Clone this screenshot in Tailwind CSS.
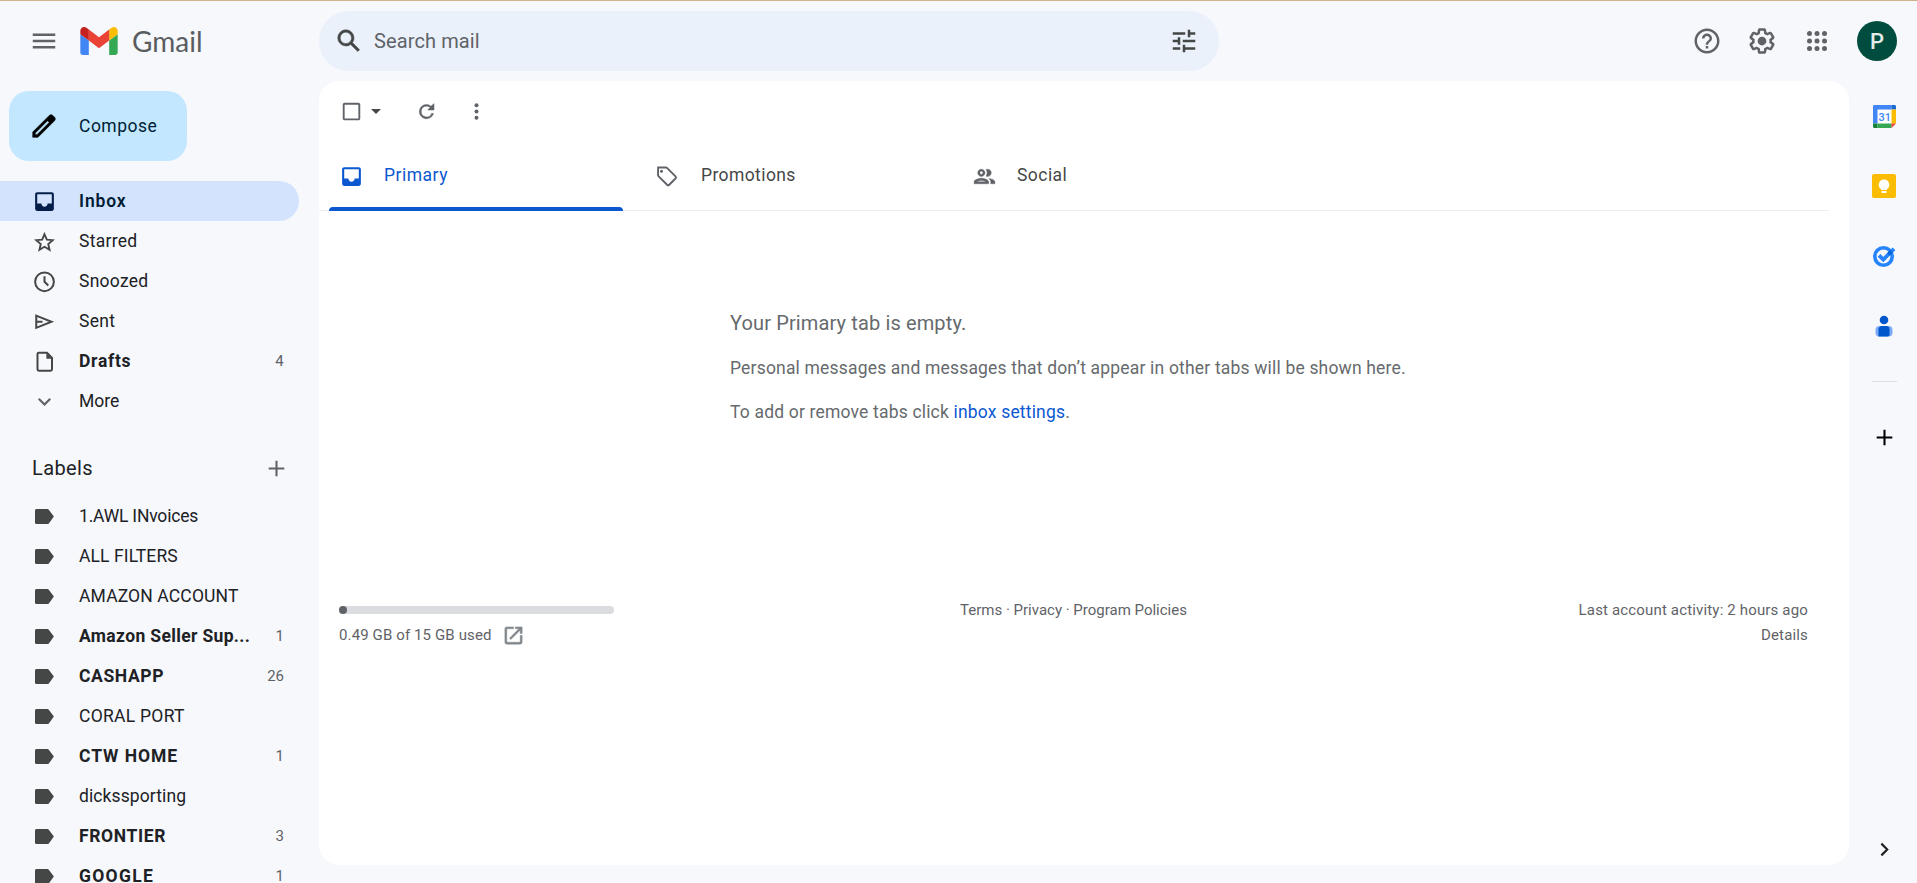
<!DOCTYPE html>
<html lang="en">
<head>
    <meta charset="UTF-8">
    <meta name="viewport" content="width=device-width, initial-scale=1.0">
    <title>Inbox - Gmail</title>
    <script src="https://cdn.jsdelivr.net/npm/@tailwindcss/browser@4"></script>
</head>
<body class="h-screen overflow-hidden bg-[#f6f8fc] border-t border-[#cdb28c] font-['Roboto',sans-serif] text-[#202124] flex flex-col">
    <!-- shared icons -->
    <svg class="hidden">
        <symbol id="label" viewBox="0 0 20 20"><path d="M3.500 4h8.700c.6 0 1.100.3 1.400.7L17.500 10l-3.900 5.300c-.3.400-.8.700-1.400.700H3.500C2.700 16 2.400 15.300 2.400 14.500v-9C2.400 4.700 2.700 4 3.500 4z"/></symbol>
        <symbol id="inbox" viewBox="0 0 24 24"><path d="M19 3H5c-1.100 0-2 .9-2 2v14c0 1.100.9 2 2 2h14c1.100 0 2-.9 2-2V5c0-1.100-.9-2-2-2zm0 11h-4c0 1.660-1.350 3-3 3s-3-1.340-3-3H5V5h14v9z"/></symbol>
        <symbol id="plus" viewBox="0 0 24 24"><path d="M19.500 13h-6.500v6.500h-2v-6.500H4.500v-2h6.500V4.500h2v6.500h6.500z"/></symbol>
    </svg>

    <header class="h-20 shrink-0 flex items-center">
        <div class="w-[319px] shrink-0 flex items-center pl-[29px]">
            <svg class="size-[30px] fill-[#5f6368]" viewBox="0 0 24 24"><path d="M3 18h18v-2H3v2zm0-5h18v-2H3v2zm0-7v2h18V6H3z"/></svg>
            <svg class="ml-[21px] w-[38px] h-7" viewBox="52 42 88 66">
                <path fill="#4285f4" d="M58 108h14V74L52 59v43c0 3.320 2.690 6 6 6"/>
                <path fill="#34a853" d="M120 108h14c3.320 0 6-2.690 6-6V59l-20 15"/>
                <path fill="#fbbc04" d="M120 48v26l20-15v-8c0-7.420-8.470-11.650-14.400-7.200"/>
                <path fill="#ea4335" d="M72 74V48l24 18 24-18v26L96 92"/>
                <path fill="#c5221f" d="M52 51v8l20 15V48l-5.600-4.200c-5.940-4.450-14.400-.22-14.400 7.200"/>
            </svg>
            <span class="ml-[14px] text-[28px] leading-none font-['Lato',sans-serif] text-[#5a5d60]">Gmail</span>
        </div>
        <div class="w-[900px] h-[60px] rounded-full bg-[#eaf1fb] flex items-center pl-[15px] pr-5">
            <svg class="size-[30px] fill-[#444746]" viewBox="0 0 24 24"><path stroke="#444746" stroke-width=".4" d="M20.490 19l-5.730-5.730C15.530 12.200 16 10.910 16 9.500A6.500 6.500 0 1 0 9.500 16c1.410 0 2.700-.47 3.770-1.240L19 20.490 20.490 19zM5 9.500C5 7.010 7.010 5 9.500 5S14 7.010 14 9.500 11.990 14 9.500 14 5 11.990 5 9.500z"/></svg>
            <span class="ml-[10px] flex-1 text-xl tracking-[0.11px] text-[#5f6368]">Search mail</span>
            <svg class="size-[30px] fill-[#444746]" viewBox="0 0 24 24"><path d="M3 17v2h6v-2H3zM3 5v2h10V5H3zm10 16v-2h8v-2h-8v-2h-2v6h2zM7 9v2H3v2h4v2h2V9H7zm14 4v-2H11v2h10zm-6-4h2V7h4V5h-4V3h-2v6z"/></svg>
        </div>
        <div class="ml-auto mr-5 flex items-center gap-[25px]">
            <svg class="size-[30px] fill-[#5f6368]" viewBox="0 0 24 24"><path d="M11 18h2v-2h-2v2zm1-16C6.480 2 2 6.480 2 12s4.480 10 10 10 10-4.480 10-10S17.520 2 12 2zm0 18c-4.410 0-8-3.590-8-8s3.590-8 8-8 8 3.590 8 8-3.590 8-8 8zm0-14c-2.210 0-4 1.790-4 4h2c0-1.100.9-2 2-2s2 .9 2 2c0 2-3 1.750-3 5h2c0-2.250 3-2.500 3-5 0-2.210-1.790-4-4-4z"/></svg>
            <svg class="size-[30px] fill-[#5f6368]" viewBox="0 0 24 24"><path d="M13.850 22.250h-3.700c-.74 0-1.360-.54-1.450-1.270l-.27-1.890c-.27-.14-.53-.29-.79-.46l-1.800.72c-.7.260-1.470-.03-1.810-.65L2.200 15.530c-.35-.66-.2-1.440.36-1.880l1.530-1.190c-.01-.15-.02-.3-.02-.46 0-.15.010-.31.020-.46l-1.520-1.190c-.59-.45-.74-1.260-.37-1.880l1.850-3.190c.34-.62 1.110-.9 1.790-.63l1.810.73c.26-.17.520-.32.780-.46l.27-1.910c.09-.7.710-1.250 1.440-1.250h3.700c.74 0 1.360.54 1.450 1.270l.27 1.890c.27.140.53.290.79.460l1.800-.72c.71-.26 1.480.03 1.820.65l1.840 3.180c.36.660.2 1.440-.36 1.880l-1.520 1.190c.01.150.02.300.02.460s-.01.310-.02.460l1.520 1.190c.56.450.720 1.230.37 1.860l-1.860 3.220c-.34.620-1.110.9-1.800.63l-1.800-.72c-.26.170-.52.320-.78.460l-.27 1.910c-.1.680-.72 1.220-1.460 1.220zm-3.230-2h2.760l.37-2.550.53-.22c.44-.18.880-.44 1.340-.78l.45-.34 2.380.96 1.380-2.400-2.030-1.580.07-.56c.03-.26.060-.51.060-.78s-.03-.53-.06-.78l-.07-.56 2.030-1.580-1.390-2.400-2.390.96-.45-.35c-.42-.32-.87-.58-1.330-.77l-.52-.22-.37-2.550h-2.760l-.37 2.550-.53.210c-.44.190-.88.440-1.340.79l-.45.330-2.380-.95-1.390 2.390 2.030 1.580-.07.56a7 7 0 0 0-.06.79c0 .26.020.530.060.78l.07.56-2.030 1.580 1.380 2.400 2.390-.96.450.35c.43.330.86.580 1.330.77l.53.220.38 2.550z"/><circle cx="12" cy="12" r="3.500"/></svg>
            <svg class="size-[30px] fill-[#5f6368]" viewBox="0 0 24 24"><circle cx="6" cy="6" r="2"/><circle cx="12" cy="6" r="2"/><circle cx="18" cy="6" r="2"/><circle cx="6" cy="12" r="2"/><circle cx="12" cy="12" r="2"/><circle cx="18" cy="12" r="2"/><circle cx="6" cy="18" r="2"/><circle cx="12" cy="18" r="2"/><circle cx="18" cy="18" r="2"/></svg>
            <div class="size-10 rounded-full bg-[#004d40] text-[#e3ece9] text-[22px] font-medium flex items-center justify-center pt-px">P</div>
        </div>
    </header>

    <div class="flex-1 min-h-0 flex">
        <aside class="w-[319px] shrink-0 overflow-hidden pt-[10px] text-[17.5px] whitespace-nowrap">
            <button class="ml-[9px] w-[178px] h-[70px] rounded-[20px] bg-[#c2e7ff] text-[#001d35] font-[450] flex items-center pl-5">
                <svg class="size-[30px] mr-5 fill-black" viewBox="0 0 24 24"><path stroke="#000" stroke-width=".5" d="M20.410 4.940l-1.350-1.350c-.78-.78-2.050-.78-2.830 0L3 16.820V21h4.180L20.410 7.770c.79-.78.790-2.050 0-2.830zM6.350 19H5v-1.350l9.820-9.820 1.350 1.350L6.350 19z"/></svg>
                <span class="tracking-[0.5px]">Compose</span>
            </button>

            <nav class="mt-5 w-[299px] tracking-[0.27px]">
                <a class="h-10 flex items-center pl-8 pr-[15px] rounded-r-full bg-[#d3e3fd] font-semibold text-[#001d35]">
                    <svg class="size-[25px] mr-[22px] fill-[#041e49]"><use href="#inbox"/></svg>
                    <span class="tracking-[0.85px]">Inbox</span>
                </a>
                <a class="h-10 flex items-center pl-8 pr-[15px]">
                    <svg class="size-[25px] mr-[22px] fill-none stroke-[#444746]" viewBox="0 0 20 20"><path d="M10 4.200l1.850 4.350 4.700.4-3.570 3.100 1.070 4.600L10 14.200l-4.050 2.450 1.070-4.600-3.570-3.100 4.700-.4z" stroke-width="1.500"/></svg>
                    <span>Starred</span>
                </a>
                <a class="h-10 flex items-center pl-8 pr-[15px]">
                    <svg class="size-[25px] mr-[22px] fill-none stroke-[#444746]" viewBox="0 0 20 20"><circle cx="10" cy="10.200" r="7.500" stroke-width="1.600"/><path d="M10 5.700v4.500l3 3" stroke-width="1.600"/></svg>
                    <span>Snoozed</span>
                </a>
                <a class="h-10 flex items-center pl-8 pr-[15px]">
                    <svg class="size-[25px] mr-[22px] fill-none stroke-[#444746]" viewBox="0 0 20 20"><path d="M3.400 5.300v9.800l12.200-4.900L3.400 5.300zM3.400 10.200h5" stroke-width="1.600"/></svg>
                    <span>Sent</span>
                </a>
                <a class="h-10 flex items-center pl-8 pr-[15px]">
                    <svg class="size-[25px] mr-[22px] fill-none stroke-[#444746]" viewBox="0 0 20 20"><path d="M5.500 2.900h6.500l4 4.200v9.100c0 .6-.5 1.100-1.100 1.100H5.500c-.6 0-1.100-.5-1.100-1.100V4c0-.6.500-1.100 1.100-1.100z" stroke-width="1.600"/><path d="M11.500 3v4.700h4.500z" fill="#444746" stroke="none"/></svg>
                    <span class="font-bold tracking-[0.7px]">Drafts</span>
                    <span class="ml-auto text-[15px] text-[#5f6368]">4</span>
                </a>
                <a class="h-10 flex items-center pl-8 pr-[15px]">
                    <svg class="size-[25px] mr-[22px] fill-none stroke-[#5f6368]" viewBox="0 0 20 20"><path d="M5.400 7.800L10 12.400l4.600-4.600" stroke-width="1.700"/></svg>
                    <span class="tracking-normal">More</span>
                </a>
            </nav>

            <div class="mt-[22px] h-[50px] w-[299px] flex items-center justify-between pl-8 pr-[10.5px]">
                <h3 class="text-xl font-[450] tracking-[0.4px]">Labels</h3>
                <svg class="size-[25px] fill-[#5f6368]"><use href="#plus"/></svg>
            </div>

            <ul class="mt-[3px] w-[299px]">
                <li class="h-10 flex items-center pl-8 pr-[15px]">
                    <svg class="size-[25px] mr-[22px] fill-[#444746]"><use href="#label"/></svg>
                    <span class="tracking-[-0.2px]">1.AWL INvoices</span>
                </li>
                <li class="h-10 flex items-center pl-8 pr-[15px]">
                    <svg class="size-[25px] mr-[22px] fill-[#444746]"><use href="#label"/></svg>
                    <span class="tracking-[0.1px]">ALL FILTERS</span>
                </li>
                <li class="h-10 flex items-center pl-8 pr-[15px]">
                    <svg class="size-[25px] mr-[22px] fill-[#444746]"><use href="#label"/></svg>
                    <span class="tracking-[0.14px]">AMAZON ACCOUNT</span>
                </li>
                <li class="h-10 flex items-center pl-8 pr-[15px]">
                    <svg class="size-[25px] mr-[22px] fill-[#444746]"><use href="#label"/></svg>
                    <span class="font-bold tracking-[0.35px]">Amazon Seller Sup...</span>
                    <span class="ml-auto text-[15px] text-[#5f6368]">1</span>
                </li>
                <li class="h-10 flex items-center pl-8 pr-[15px]">
                    <svg class="size-[25px] mr-[22px] fill-[#444746]"><use href="#label"/></svg>
                    <span class="font-bold tracking-[0.6px]">CASHAPP</span>
                    <span class="ml-auto text-[15px] text-[#5f6368]">26</span>
                </li>
                <li class="h-10 flex items-center pl-8 pr-[15px]">
                    <svg class="size-[25px] mr-[22px] fill-[#444746]"><use href="#label"/></svg>
                    <span class="tracking-[0.27px]">CORAL PORT</span>
                </li>
                <li class="h-10 flex items-center pl-8 pr-[15px]">
                    <svg class="size-[25px] mr-[22px] fill-[#444746]"><use href="#label"/></svg>
                    <span class="font-bold tracking-[0.95px]">CTW HOME</span>
                    <span class="ml-auto text-[15px] text-[#5f6368]">1</span>
                </li>
                <li class="h-10 flex items-center pl-8 pr-[15px]">
                    <svg class="size-[25px] mr-[22px] fill-[#444746]"><use href="#label"/></svg>
                    <span class="tracking-[0.1px]">dickssporting</span>
                </li>
                <li class="h-10 flex items-center pl-8 pr-[15px]">
                    <svg class="size-[25px] mr-[22px] fill-[#444746]"><use href="#label"/></svg>
                    <span class="font-bold tracking-[0.65px]">FRONTIER</span>
                    <span class="ml-auto text-[15px] text-[#5f6368]">3</span>
                </li>
                <li class="h-10 flex items-center pl-8 pr-[15px]">
                    <svg class="size-[25px] mr-[22px] fill-[#444746]"><use href="#label"/></svg>
                    <span class="font-bold tracking-[1.3px]">GOOGLE</span>
                    <span class="ml-auto text-[15px] text-[#5f6368]">1</span>
                </li>
            </ul>
        </aside>

        <main class="w-[1530px] shrink-0 mb-[18px] rounded-[20px] bg-white">
            <!-- toolbar -->
            <div class="h-[60px] flex items-center pl-5">
                <svg class="size-[25px] fill-[#5f6368]" viewBox="0 0 20 20"><path d="M15.500 4.500v11h-11v-11h11M15.500 3h-11C3.700 3 3 3.700 3 4.500v11c0 .8.700 1.500 1.500 1.500h11c.8 0 1.500-.7 1.500-1.500v-11c0-.8-.7-1.500-1.500-1.500z"/></svg>
                <svg class="ml-[7px] w-[10px] h-[5px] fill-[#444746]" viewBox="0 0 10 5"><path d="M0 0h10L5 5z"/></svg>
                <svg class="ml-[33px] size-[25px] fill-[#5f6368] stroke-[#5f6368]" viewBox="0 0 20 20"><path stroke-width=".4" d="M13.500 5.700A5.500 5.500 0 0 0 10 4.300a5.750 5.750 0 1 0 5.600 7.200h-1.500A4.300 4.300 0 1 1 10 5.700c1.100 0 2.100.4 2.900 1.100L11 8.800h5V3.700z"/></svg>
                <svg class="ml-[25px] size-[25px] fill-[#5f6368]" viewBox="0 0 20 20"><circle cx="10" cy="5" r="1.600"/><circle cx="10" cy="10" r="1.600"/><circle cx="10" cy="15" r="1.600"/></svg>
            </div>

            <!-- category tabs -->
            <div class="w-[1510px] h-[70px] flex border-b border-[#e9eeee] text-[17.5px] font-[450] text-[#444746]">
                <div class="relative w-[316px] flex items-center pl-5 text-[#0b57d0]">
                    <svg class="size-[25px] mt-px mr-5 fill-[#0b57d0]"><use href="#inbox"/></svg>
                    <span class="tracking-[0.5px]">Primary</span>
                    <div class="absolute left-[10px] -bottom-px w-[294px] h-1 rounded-t bg-[#0b57d0]"></div>
                </div>
                <div class="w-[316px] flex items-center pl-[19px]">
                    <svg class="size-[25px] mt-px mr-[22px] fill-none stroke-[#5f6368]" viewBox="0 0 20 20"><path d="M3.300 2.800h6.200c.4 0 .8.200 1.100.5l6.600 6.600c.5.500.5 1.200 0 1.700l-5 5c-.5.500-1.200.5-1.700 0L3.700 9.900c-.3-.3-.5-.7-.5-1.100z" stroke-width="1.500"/><circle cx="6" cy="5.700" r="1.200" fill="#5f6368" stroke="none"/></svg>
                    <span class="tracking-[0.4px]">Promotions</span>
                </div>
                <div class="w-[316px] flex items-center pl-[21px]">
                    <svg class="size-[25px] mt-px mr-5 fill-[#5f6368] stroke-[#5f6368]" viewBox="0 0 24 24"><path stroke-width=".4" d="M9 13.750c-2.340 0-7 1.170-7 3.500V19h14v-1.750c0-2.330-4.660-3.500-7-3.500zM4.340 17c.84-.58 2.870-1.250 4.660-1.250s3.820.67 4.660 1.250H4.340zM9 12c1.930 0 3.500-1.570 3.500-3.500S10.930 5 9 5 5.500 6.570 5.500 8.500 7.070 12 9 12zm0-5c.83 0 1.500.67 1.500 1.500S9.830 10 9 10s-1.500-.67-1.500-1.500S8.170 7 9 7zm7.040 6.810c1.160.84 1.960 1.960 1.960 3.440V19h4v-1.750c0-2.020-3.500-3.170-5.960-3.440zM15 12c1.930 0 3.500-1.570 3.500-3.500S16.930 5 15 5c-.54 0-1.040.13-1.500.35.63.89 1 1.980 1 3.150s-.37 2.260-1 3.150c.46.22.96.350 1.500.350z"/></svg>
                    <span class="tracking-[0.45px]">Social</span>
                </div>
            </div>

            <!-- empty state -->
            <div class="pt-[90px] pl-[411px] text-[17.5px] tracking-[0.18px] text-[#666a6d]">
                <p class="h-[45px] leading-[45px] text-xl tracking-[0.13px]">Your Primary tab is empty.</p>
                <p class="h-11 leading-[45px]">Personal messages and messages that don’t appear in other tabs will be shown here.</p>
                <p class="h-[45px] leading-[44px]">To add or remove tabs click <a class="text-[#0b57d0]">inbox settings</a>.</p>
            </div>

            <footer class="mt-[163px] pl-5 pr-[41px] flex justify-between text-[15px] leading-[25px] text-[#5f6368]">
                <div class="w-[275px]">
                    <div class="mt-2 h-2 rounded-full bg-[#dadce0]"><div class="size-2 rounded-full bg-[#5f6368]"></div></div>
                    <div class="mt-[9px] flex items-center">
                        <span class="tracking-[0.12px]">0.49 GB of 15 GB used</span>
                        <svg class="ml-[10px] size-[23px] fill-[#80868b] stroke-[#80868b]" viewBox="0 0 24 24"><path stroke-width=".5" d="M19 19H5V5h7V3H5a2 2 0 0 0-2 2v14a2 2 0 0 0 2 2h14c1.100 0 2-.9 2-2v-7h-2v7zM14 3v2h3.590l-9.830 9.830 1.410 1.410L19 6.410V10h2V3h-7z"/></svg>
                    </div>
                </div>
                <div>Terms · Privacy · Program Policies</div>
                <div class="w-[275px] text-right tracking-[0.16px]">Last account activity: 2 hours ago<br>Details</div>
            </footer>
        </main>

        <!-- side panel -->
        <aside class="flex-1 flex flex-col items-center pl-[2px]">
            <svg class="mt-6 size-[23px]" viewBox="0 0 23 23">
                <path fill="#fff" d="M4 4h15v15H4z"/>
                <path fill="#4285f4" d="M1.500 0H18.500v4.500h-14v14H0v-17C0 .6.600 0 1.500 0z"/>
                <path fill="#1967d2" d="M18.500 0h3c.9 0 1.500.6 1.500 1.500v3h-4.500z"/>
                <path fill="#fbbc04" d="M18.500 4.500H23v14h-4.500z"/>
                <path fill="#34a853" d="M4.500 18.500h14V23h-14z"/>
                <path fill="#188038" d="M0 18.500h4.500V23h-3C.6 23 0 22.400 0 21.500z"/>
                <path fill="#ea4335" d="M18.500 18.500H23L18.500 23z"/>
                <text x="11.700" y="15.600" text-anchor="middle" font-family="Roboto" font-size="11" font-weight="500" fill="#4285f4">31</text>
            </svg>
            <svg class="mt-[46px] size-6" viewBox="0 0 24 24">
                <rect width="24" height="24" rx="2" fill="#fbbc04"/>
                <path fill="#fff" d="M12 5.500a5.200 5.200 0 0 0-3 9.500v1h6v-1a5.200 5.200 0 0 0-3-9.500zM9.500 17h5v2h-5z"/>
            </svg>
            <svg class="mt-[46px] size-6" viewBox="0 0 24 24">
                <circle cx="11.500" cy="12.500" r="8.700" fill="none" stroke="#2684fc" stroke-width="3.600"/>
                <path fill="none" stroke="#2684fc" stroke-width="3.800" d="M7 11.300l4.300 4.300L22 4.800"/>
                <path fill="none" stroke="#0066da" stroke-width="3.800" d="M16.500 10.300l3-3"/>
            </svg>
            <svg class="mt-[46px] size-6" viewBox="0 0 24 24">
                <circle cx="12" cy="6" r="4.300" fill="#0057cc"/>
                <rect x="3.500" y="12" width="17" height="10.500" rx="4" fill="#7baaf7"/>
                <path fill="#0057cc" d="M10 12h4.500c1.900 0 3 1.500 3 3.500v5c0 1.300-.7 2-2 2H6.500v-7c0-2 1.600-3.500 3.500-3.500z"/>
            </svg>
            <div class="mt-[43px] w-[25px] h-px bg-[#dddfe2]"></div>
            <svg class="mt-[43px] size-[25px]"><use href="#plus"/></svg>
            <svg class="mt-auto mb-[21px] size-[25px] fill-none stroke-[#1f1f1f]" viewBox="0 0 20 20"><path d="M7.500 5.300L12.200 10l-4.700 4.700" stroke-width="1.700"/></svg>
        </aside>
    </div>
</body>
</html>
